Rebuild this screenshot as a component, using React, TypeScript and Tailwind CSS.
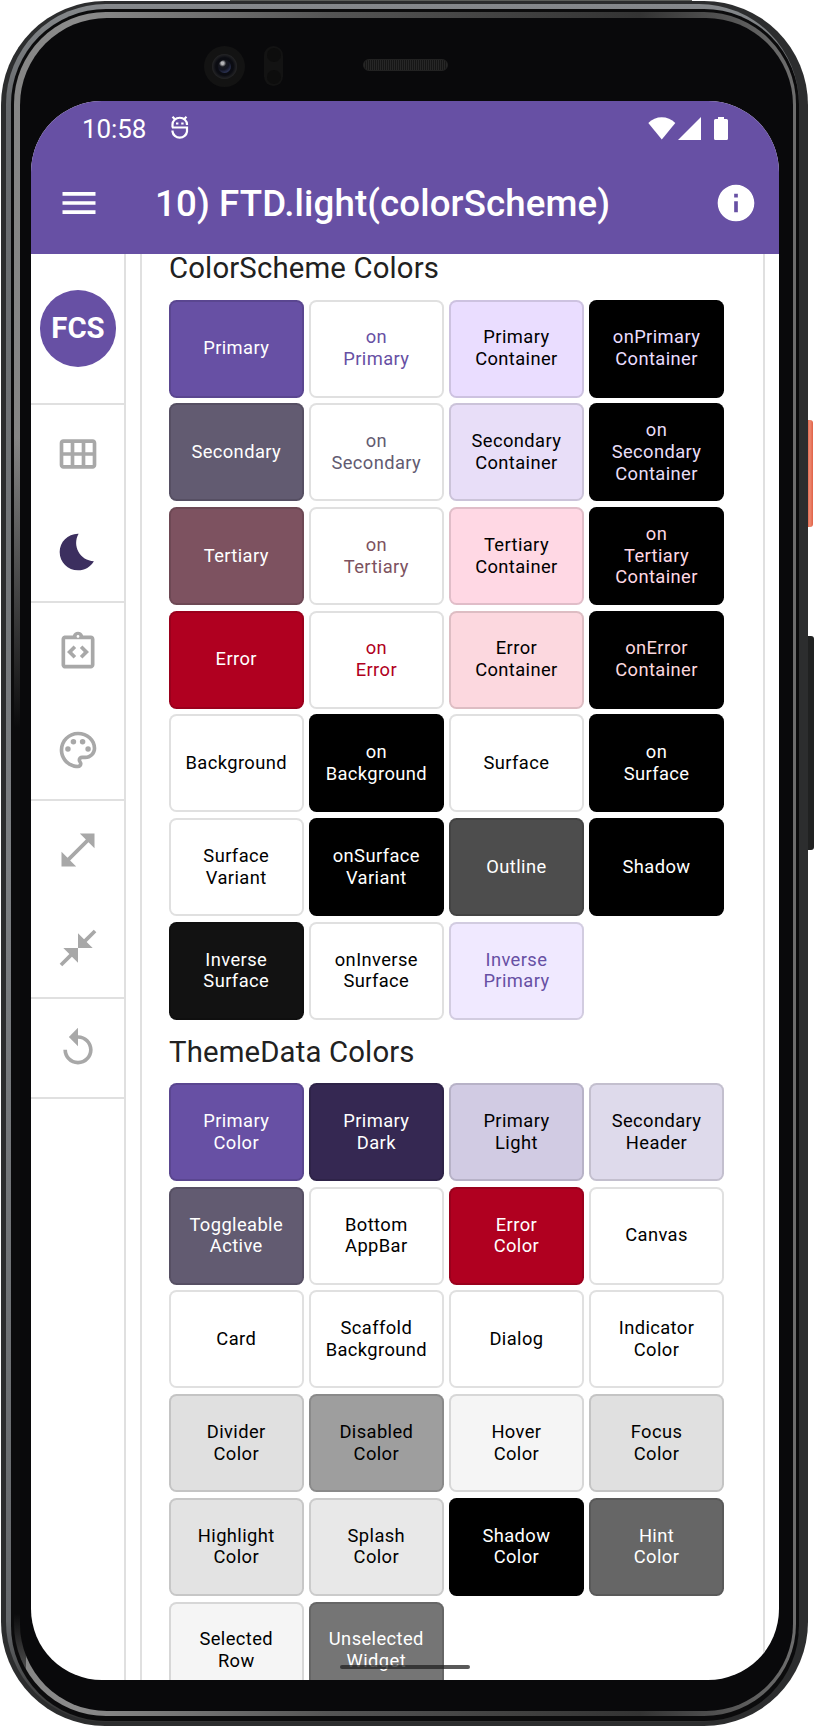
import React from "react";
import type { IconType } from "react-icons";
import {
  MdBedtime,
  MdCloseFullscreen,
  MdInfo,
  MdMenu,
  MdOpenInFull,
  MdOutlineCalendarViewMonth,
  MdOutlineIntegrationInstructions,
  MdOutlinePalette,
  MdReplay,
} from "react-icons/md";

type Swatch = { label: string; tone: string };

const WHITE = "bg-white text-black";
const BLACK = "bg-black text-white";

const schemeColors: Swatch[] = [
  { label: "Primary", tone: "bg-[#6750a4] text-white" },
  { label: "on\nPrimary", tone: "bg-white text-[#6750a4]" },
  { label: "Primary\nContainer", tone: "bg-[#eaddff] text-black" },
  { label: "onPrimary\nContainer", tone: "bg-black text-[#eaddff]" },
  { label: "Secondary", tone: "bg-[#625b71] text-white" },
  { label: "on\nSecondary", tone: "bg-white text-[#625b71]" },
  { label: "Secondary\nContainer", tone: "bg-[#e8def8] text-black" },
  { label: "on\nSecondary\nContainer", tone: "bg-black text-[#e8def8]" },
  { label: "Tertiary", tone: "bg-[#7d5260] text-white" },
  { label: "on\nTertiary", tone: "bg-white text-[#7d5260]" },
  { label: "Tertiary\nContainer", tone: "bg-[#ffd8e4] text-black" },
  { label: "on\nTertiary\nContainer", tone: "bg-black text-[#ffd8e4]" },
  { label: "Error", tone: "bg-[#b00020] text-white" },
  { label: "on\nError", tone: "bg-white text-[#b00020]" },
  { label: "Error\nContainer", tone: "bg-[#fcd8df] text-black" },
  { label: "onError\nContainer", tone: "bg-black text-[#fcd8df]" },
  { label: "Background", tone: WHITE },
  { label: "on\nBackground", tone: BLACK },
  { label: "Surface", tone: WHITE },
  { label: "on\nSurface", tone: BLACK },
  { label: "Surface\nVariant", tone: WHITE },
  { label: "onSurface\nVariant", tone: BLACK },
  { label: "Outline", tone: "bg-[#4d4d4d] text-white" },
  { label: "Shadow", tone: BLACK },
  { label: "Inverse\nSurface", tone: "bg-[#121212] text-white" },
  { label: "onInverse\nSurface", tone: WHITE },
  { label: "Inverse\nPrimary", tone: "bg-[#f0e9ff] text-[#6750a4]" },
];

const themeColors: Swatch[] = [
  { label: "Primary\nColor", tone: "bg-[#6750a4] text-white" },
  { label: "Primary\nDark", tone: "bg-[#352852] text-white" },
  { label: "Primary\nLight", tone: "bg-[#d1cbe3] text-black" },
  { label: "Secondary\nHeader", tone: "bg-[#dedaeb] text-black" },
  { label: "Toggleable\nActive", tone: "bg-[#625b71] text-white" },
  { label: "Bottom\nAppBar", tone: WHITE },
  { label: "Error\nColor", tone: "bg-[#b00020] text-white" },
  { label: "Canvas", tone: WHITE },
  { label: "Card", tone: WHITE },
  { label: "Scaffold\nBackground", tone: WHITE },
  { label: "Dialog", tone: WHITE },
  { label: "Indicator\nColor", tone: WHITE },
  { label: "Divider\nColor", tone: "bg-[#e0e0e0] text-black" },
  { label: "Disabled\nColor", tone: "bg-[#9e9e9e] text-black" },
  { label: "Hover\nColor", tone: "bg-[#f5f5f5] text-black" },
  { label: "Focus\nColor", tone: "bg-[#e0e0e0] text-black" },
  { label: "Highlight\nColor", tone: "bg-[#e3e3e3] text-black" },
  { label: "Splash\nColor", tone: "bg-[#e8e8e8] text-black" },
  { label: "Shadow\nColor", tone: BLACK },
  { label: "Hint\nColor", tone: "bg-[#666666] text-white" },
  { label: "Selected\nRow", tone: "bg-[#f5f5f5] text-black" },
  { label: "Unselected\nWidget", tone: "bg-[#757575] text-white" },
];

function SwatchGrid({ swatches }: { swatches: Swatch[] }) {
  return (
    <div className="grid shrink-0 grid-cols-[repeat(4,134.5px)] auto-rows-[98px] gap-x-[5.6px] gap-y-[5.7px]">
      {swatches.map(({ label, tone }) => (
        <div
          key={label}
          className={`flex items-center justify-center rounded-[7.5px] border-2 border-black/12 pb-[1px] text-center text-[18.33px] leading-[21.8px] tracking-[0.4px] whitespace-pre-line ${tone}`}
        >
          {label}
        </div>
      ))}
    </div>
  );
}

function RailGroup({ icons }: { icons: { Icon: IconType; color: string }[] }) {
  return (
    <div className="shrink-0 border-b-2 border-[#e0e0e0]">
      {icons.map(({ Icon, color }, i) => (
        <div
          key={i}
          className={`flex items-center justify-center pl-[2px] ${i === icons.length - 1 ? "h-[97px]" : "h-[99px]"} ${color}`}
        >
          <Icon size={44} />
        </div>
      ))}
    </div>
  );
}

const MUTED = "text-[#a8a8a8]";

function NavigationRail() {
  return (
    <nav className="flex w-[94.5px] shrink-0 flex-col border-r-2 border-[#e0e0e0]">
      <div className="flex h-[150.5px] shrink-0 items-center justify-center border-b-2 border-[#e0e0e0] pl-[1.5px]">
        <div className="flex size-[76.5px] items-center justify-center rounded-full bg-[#6750a4] text-[29.33px] leading-none font-bold text-white">
          FCS
        </div>
      </div>
      <RailGroup
        icons={[
          { Icon: MdOutlineCalendarViewMonth, color: MUTED },
          { Icon: MdBedtime, color: "text-[#3c2f5f]" },
        ]}
      />
      <RailGroup
        icons={[
          { Icon: MdOutlineIntegrationInstructions, color: MUTED },
          { Icon: MdOutlinePalette, color: MUTED },
        ]}
      />
      <RailGroup
        icons={[
          { Icon: MdOpenInFull, color: MUTED },
          { Icon: MdCloseFullscreen, color: MUTED },
        ]}
      />
      <div className="shrink-0 pt-[1px]">
        <RailGroup icons={[{ Icon: MdReplay, color: MUTED }]} />
      </div>
    </nav>
  );
}

function StatusBar() {
  return (
    <div className="flex h-[54px] items-center pr-[49px] pl-[51px] text-white">
      <span className="pt-[1px] text-[26px] leading-none tracking-[-0.1px]">10:58</span>
      <svg className="ml-[25px]" width="18" height="24" viewBox="0 0 18 24" fill="none" stroke="currentColor" strokeWidth="2.2">
        <path d="M1.500 .8l3 3M15.500 .8l-3 3" />
        <path d="M1.500 11.500V8.500a7 6.500 0 0 1 14.500 0V9" />
        <path d="M1 11.500h15V15.500a7.300 7 0 0 1-14.500 0V14.500" />
        <path d="M5 7.500h2.400M10.200 7.500h2.400" />
      </svg>
      <svg className="ml-auto" width="82" height="25" viewBox="0 0 82 25" fill="currentColor">
        <path d="M.3 7C7.500-.8 20-.8 27.300 7L13.800 23.500z" />
        <path d="M53 1v23H30z" />
        <path d="M70 1h6v2h2.500q1.500 0 1.500 1.500v18q0 1.500-1.500 1.500h-11q-1.500 0-1.500-1.500v-18q0-1.500 1.500-1.500H70z" />
      </svg>
    </div>
  );
}

function AppBar() {
  return (
    <header className="h-[153px] shrink-0 bg-[#6750a4]">
      <StatusBar />
      <div className="flex h-[96px] items-center pr-[21.5px] pl-[25.5px] text-white">
        <MdMenu size={44} />
        <h1 className="ml-[54.5px] pt-[2px] text-[36.67px] leading-none font-medium tracking-[0.12px] whitespace-nowrap">
          10) FTD.light(colorScheme)
        </h1>
        <MdInfo className="ml-auto" size={44} />
      </div>
    </header>
  );
}

function Content() {
  return (
    <main className="ml-[14px] flex w-[625px] flex-col border-x-2 border-[#e0e0e0] pl-[27.5px] text-[#212121]">
      <h2 className="h-[45.7px] shrink-0 text-[29.33px] leading-[29px] tracking-[0.15px]">ColorScheme Colors</h2>
      <SwatchGrid swatches={schemeColors} />
      <h2 className="h-[63.3px] shrink-0 pt-[15px] text-[29.33px] leading-[34px] tracking-[0.15px]">ThemeData Colors</h2>
      <SwatchGrid swatches={themeColors} />
    </main>
  );
}

function PhoneHardware() {
  return (
    <>
      <div className="absolute top-[46px] left-[204px] flex size-[41px] items-center justify-center rounded-full bg-[#131313]">
        <div className="flex size-[25px] items-center justify-center rounded-full bg-[radial-gradient(circle,#0b0c12_50%,#2b2b2c_75%)]">
          <div className="size-[13px] rounded-full bg-[radial-gradient(circle_at_35%_25%,#b5b5b8_0_10%,#17181f_28%,#11131f_50%,#343c64_85%)]" />
        </div>
      </div>
      <div className="absolute top-[46px] left-[264px] flex h-[40px] w-[19px] flex-col items-center justify-between rounded-full bg-[#131313] p-[2px]">
        <div className="size-[14px] rounded-full bg-[#0d0d0d]" />
        <div className="size-[14px] rounded-full bg-[#0d0d0d]" />
      </div>
      <div className="absolute top-[59px] left-[363px] h-[12px] w-[85px] rounded-full border border-[#222] bg-[repeating-linear-gradient(90deg,#272727_0_1px,#161616_1px_2px)]" />
    </>
  );
}

export default function App() {
  return (
    <div className="relative h-[1727px] w-[815px] overflow-hidden bg-white font-['Roboto',sans-serif]">
      <div className="absolute top-[420px] left-[800px] h-[107px] w-[13px] rounded-r-[3px] bg-[linear-gradient(90deg,#d9573f_55%,#f08a72_75%,#df6247)]" />
      <div className="absolute top-[636px] left-[800px] h-[214px] w-[14px] rounded-r-[3px] bg-[#202121]" />
      <div className="absolute top-0 left-[230px] h-[4px] w-[462px] bg-[#5d5f5b]" />
      <div className="absolute inset-y-px left-px w-[807px] rounded-[104px] bg-[#2c2d2e] pt-[3px] pr-[9px] pb-[4px] pl-[4.500px]">
        <div className="size-full rounded-[100px] bg-[linear-gradient(180deg,#85888b,#66696c_6%,#7c7f82_50%,#66696c_94%,#333)] pt-[5px] pr-0 pb-[1px] pl-[5px]">
          <div className="size-full rounded-[95px] bg-[#0b0b0c] pt-[3px] pr-[3px] pb-[5px] pl-[3.500px]">
            <div className="size-full rounded-[92px] pt-[6px] pr-[3px] pb-[5px] pl-[5.500px] [background:linear-gradient(180deg,transparent_25%,#0b0b0c_42%,#0b0b0c_94%,transparent)_left/12px_100%_no-repeat,linear-gradient(90deg,#858585,#8c8c8c_8%,#555_40%,#333_80%,#6c6c6c_99%)]">
              <div className="size-full rounded-[87px] bg-[#09090b]" />
            </div>
          </div>
        </div>
      </div>
      <PhoneHardware />
      <div className="relative mt-[101px] ml-[31px] flex h-[1579px] w-[748px] flex-col overflow-hidden rounded-[71px] bg-white">
        <AppBar />
        <div className="flex min-h-0 flex-1">
          <NavigationRail />
          <Content />
        </div>
        <div className="absolute bottom-[11px] left-[309px] h-[4px] w-[130px] rounded-full bg-[#222]/75" />
      </div>
    </div>
  );
}
